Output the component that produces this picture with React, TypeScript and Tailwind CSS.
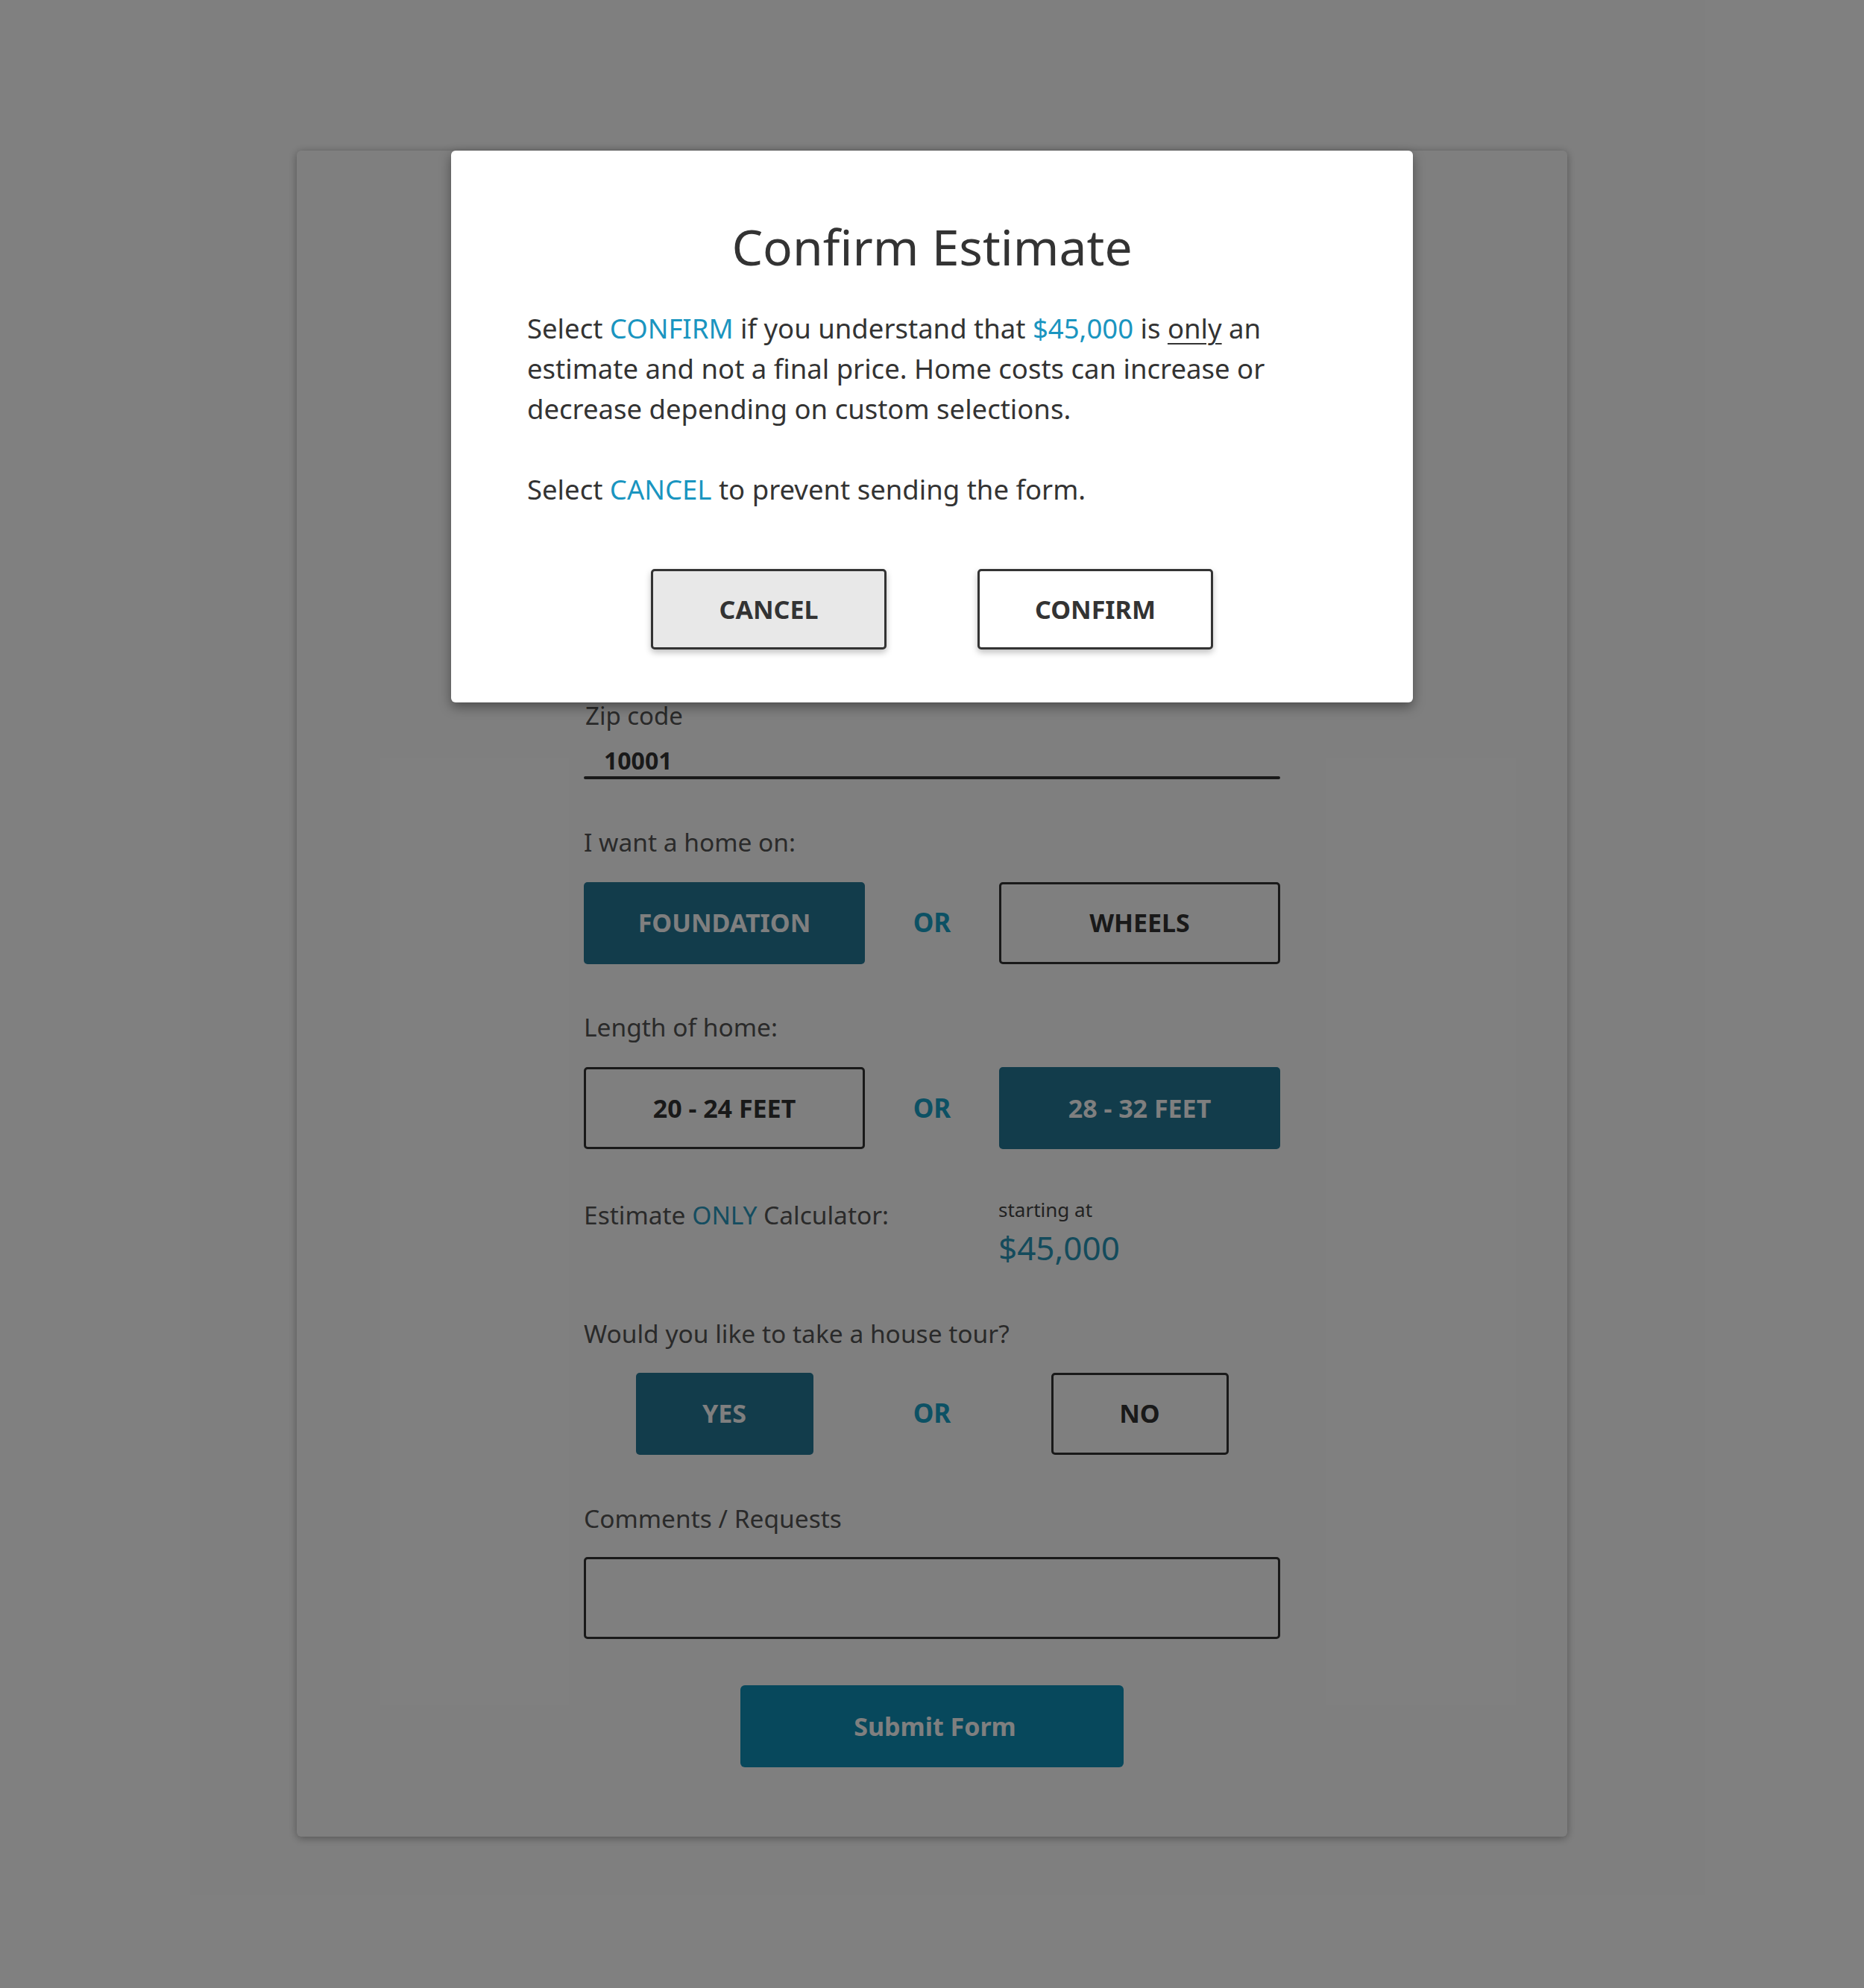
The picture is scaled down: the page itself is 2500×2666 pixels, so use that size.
import React from "react";

const font = { fontFamily: '"Noto Sans", "Open Sans", sans-serif' };

interface ToggleProps {
  label: string;
  selected?: boolean;
  narrow?: boolean;
}

const Toggle: React.FC<ToggleProps> = ({ label, selected, narrow }) => {
  const base =
    "h-[110px] rounded-[5px] flex items-center justify-center text-[34px] font-bold";
  const width = narrow ? "w-[238px]" : "w-full";
  if (selected) {
    return (
      <div className={`${base} ${width} bg-[#247896] text-white`}>{label}</div>
    );
  }
  return (
    <div
      className={`${base} ${width} border-[3px] border-[#333] text-[#333] bg-white`}
    >
      {label}
    </div>
  );
};

const ChoiceRow: React.FC<{
  left: string;
  right: string;
  leftSelected?: boolean;
  narrow?: boolean;
}> = ({ left, right, leftSelected, narrow }) => (
  <div className="grid grid-cols-[377px_1fr_377px] items-center">
    <div className="flex justify-center">
      <Toggle label={left} selected={leftSelected} narrow={narrow} />
    </div>
    <div className="text-center text-[35px] font-bold text-[#18a2c8]">OR</div>
    <div className="flex justify-center">
      <Toggle label={right} selected={!leftSelected} narrow={narrow} />
    </div>
  </div>
);

const Label: React.FC<{ children: React.ReactNode }> = ({ children }) => (
  <div className="text-[33.5px] leading-none text-[#555]">{children}</div>
);

export default function App() {
  return (
    <div
      className="relative min-h-[2666px] w-[2500px] bg-white pt-[202px]"
      style={font}
    >
      {/* form card */}
      <div className="mx-auto w-[1704px] rounded-md bg-white shadow-[0_2px_12px_rgba(0,0,0,0.35)] pb-[93px]">
        <div className="h-[741px]" />
        <div className="mx-auto w-[934px]">
          <div className="text-[33px] leading-none text-[#555] pl-[2px]">
            Zip code
          </div>
          <div className="mt-[28px] pl-[27px] text-[32px] leading-none font-bold text-[#333]">
            10001
          </div>
          <div className="mt-[5px] h-[4px] rounded-full bg-[#333]" />

          <div className="mt-[68px]">
            <Label>I want a home on:</Label>
          </div>
          <div className="mt-[36px]">
            <ChoiceRow left="FOUNDATION" right="WHEELS" leftSelected />
          </div>

          <div className="mt-[68px]">
            <Label>Length of home:</Label>
          </div>
          <div className="mt-[37px]">
            <ChoiceRow left="20 - 24 FEET" right="28 - 32 FEET" />
          </div>

          <div className="mt-[68px] grid grid-cols-[556px_1fr]">
            <div className="pt-[4px]">
              <Label>
                Estimate <span className="text-[#2a9ac0]">ONLY</span> Calculator:
              </Label>
            </div>
            <div>
              <div className="text-[26px] leading-none text-[#444]">
                starting at
              </div>
              <div className="mt-[16px] text-[44px] leading-none text-[#2896b8]">
                $45,000
              </div>
            </div>
          </div>

          <div className="mt-[77px]">
            <Label>Would you like to take a house tour?</Label>
          </div>
          <div className="mt-[35px]">
            <ChoiceRow left="YES" right="NO" leftSelected narrow />
          </div>

          <div className="mt-[69px]">
            <Label>Comments / Requests</Label>
          </div>
          <div className="mt-[35px] h-[110px] rounded-[5px] border-[3px] border-[#333]" />

          <div className="mt-[62px] flex justify-center">
            <div className="flex h-[110px] w-[514px] items-center justify-center rounded-[6px] bg-[#0e90b8] pl-[8px] text-[34px] font-bold text-white">
              Submit Form
            </div>
          </div>
        </div>
      </div>

      {/* overlay */}
      <div className="absolute inset-0 bg-black/50" />

      {/* confirm modal */}
      <div className="absolute left-1/2 top-[202px] w-[1290px] -translate-x-1/2 rounded-md bg-white px-[102px] pt-[95px] pb-[71px] shadow-[0_6px_16px_rgba(0,0,0,0.4)]">
        <h1 className="text-center text-[66px] leading-none text-[#333]">
          Confirm Estimate
        </h1>
        <p className="mt-[50px] text-[36.5px] leading-[54px] text-[#333]">
          Select <span className="text-[#1a95c0]">CONFIRM</span> if you
          understand that <span className="text-[#1a95c0]">$45,000</span> is{" "}
          <span className="underline underline-offset-[6px] decoration-2">only</span> an
          <br />
          estimate and not a final price. Home costs can increase or
          <br />
          decrease depending on custom selections.
        </p>
        <p className="mt-[54px] text-[36.5px] leading-[54px] text-[#333]">
          Select <span className="text-[#1a95c0]">CANCEL</span> to prevent
          sending the form.
        </p>
        <div className="mt-[80px] flex justify-center gap-[122px]">
          <button className="flex h-[108px] w-[316px] items-center justify-center rounded-[5px] border-[3px] border-[#333] bg-[#e8e8e8] text-[34px] font-bold text-[#333] shadow-[0_4px_8px_rgba(0,0,0,0.25)]">
            CANCEL
          </button>
          <button className="flex h-[108px] w-[316px] items-center justify-center rounded-[5px] border-[3px] border-[#333] bg-white text-[34px] font-bold text-[#333] shadow-[0_4px_8px_rgba(0,0,0,0.25)]">
            CONFIRM
          </button>
        </div>
      </div>
    </div>
  );
}
